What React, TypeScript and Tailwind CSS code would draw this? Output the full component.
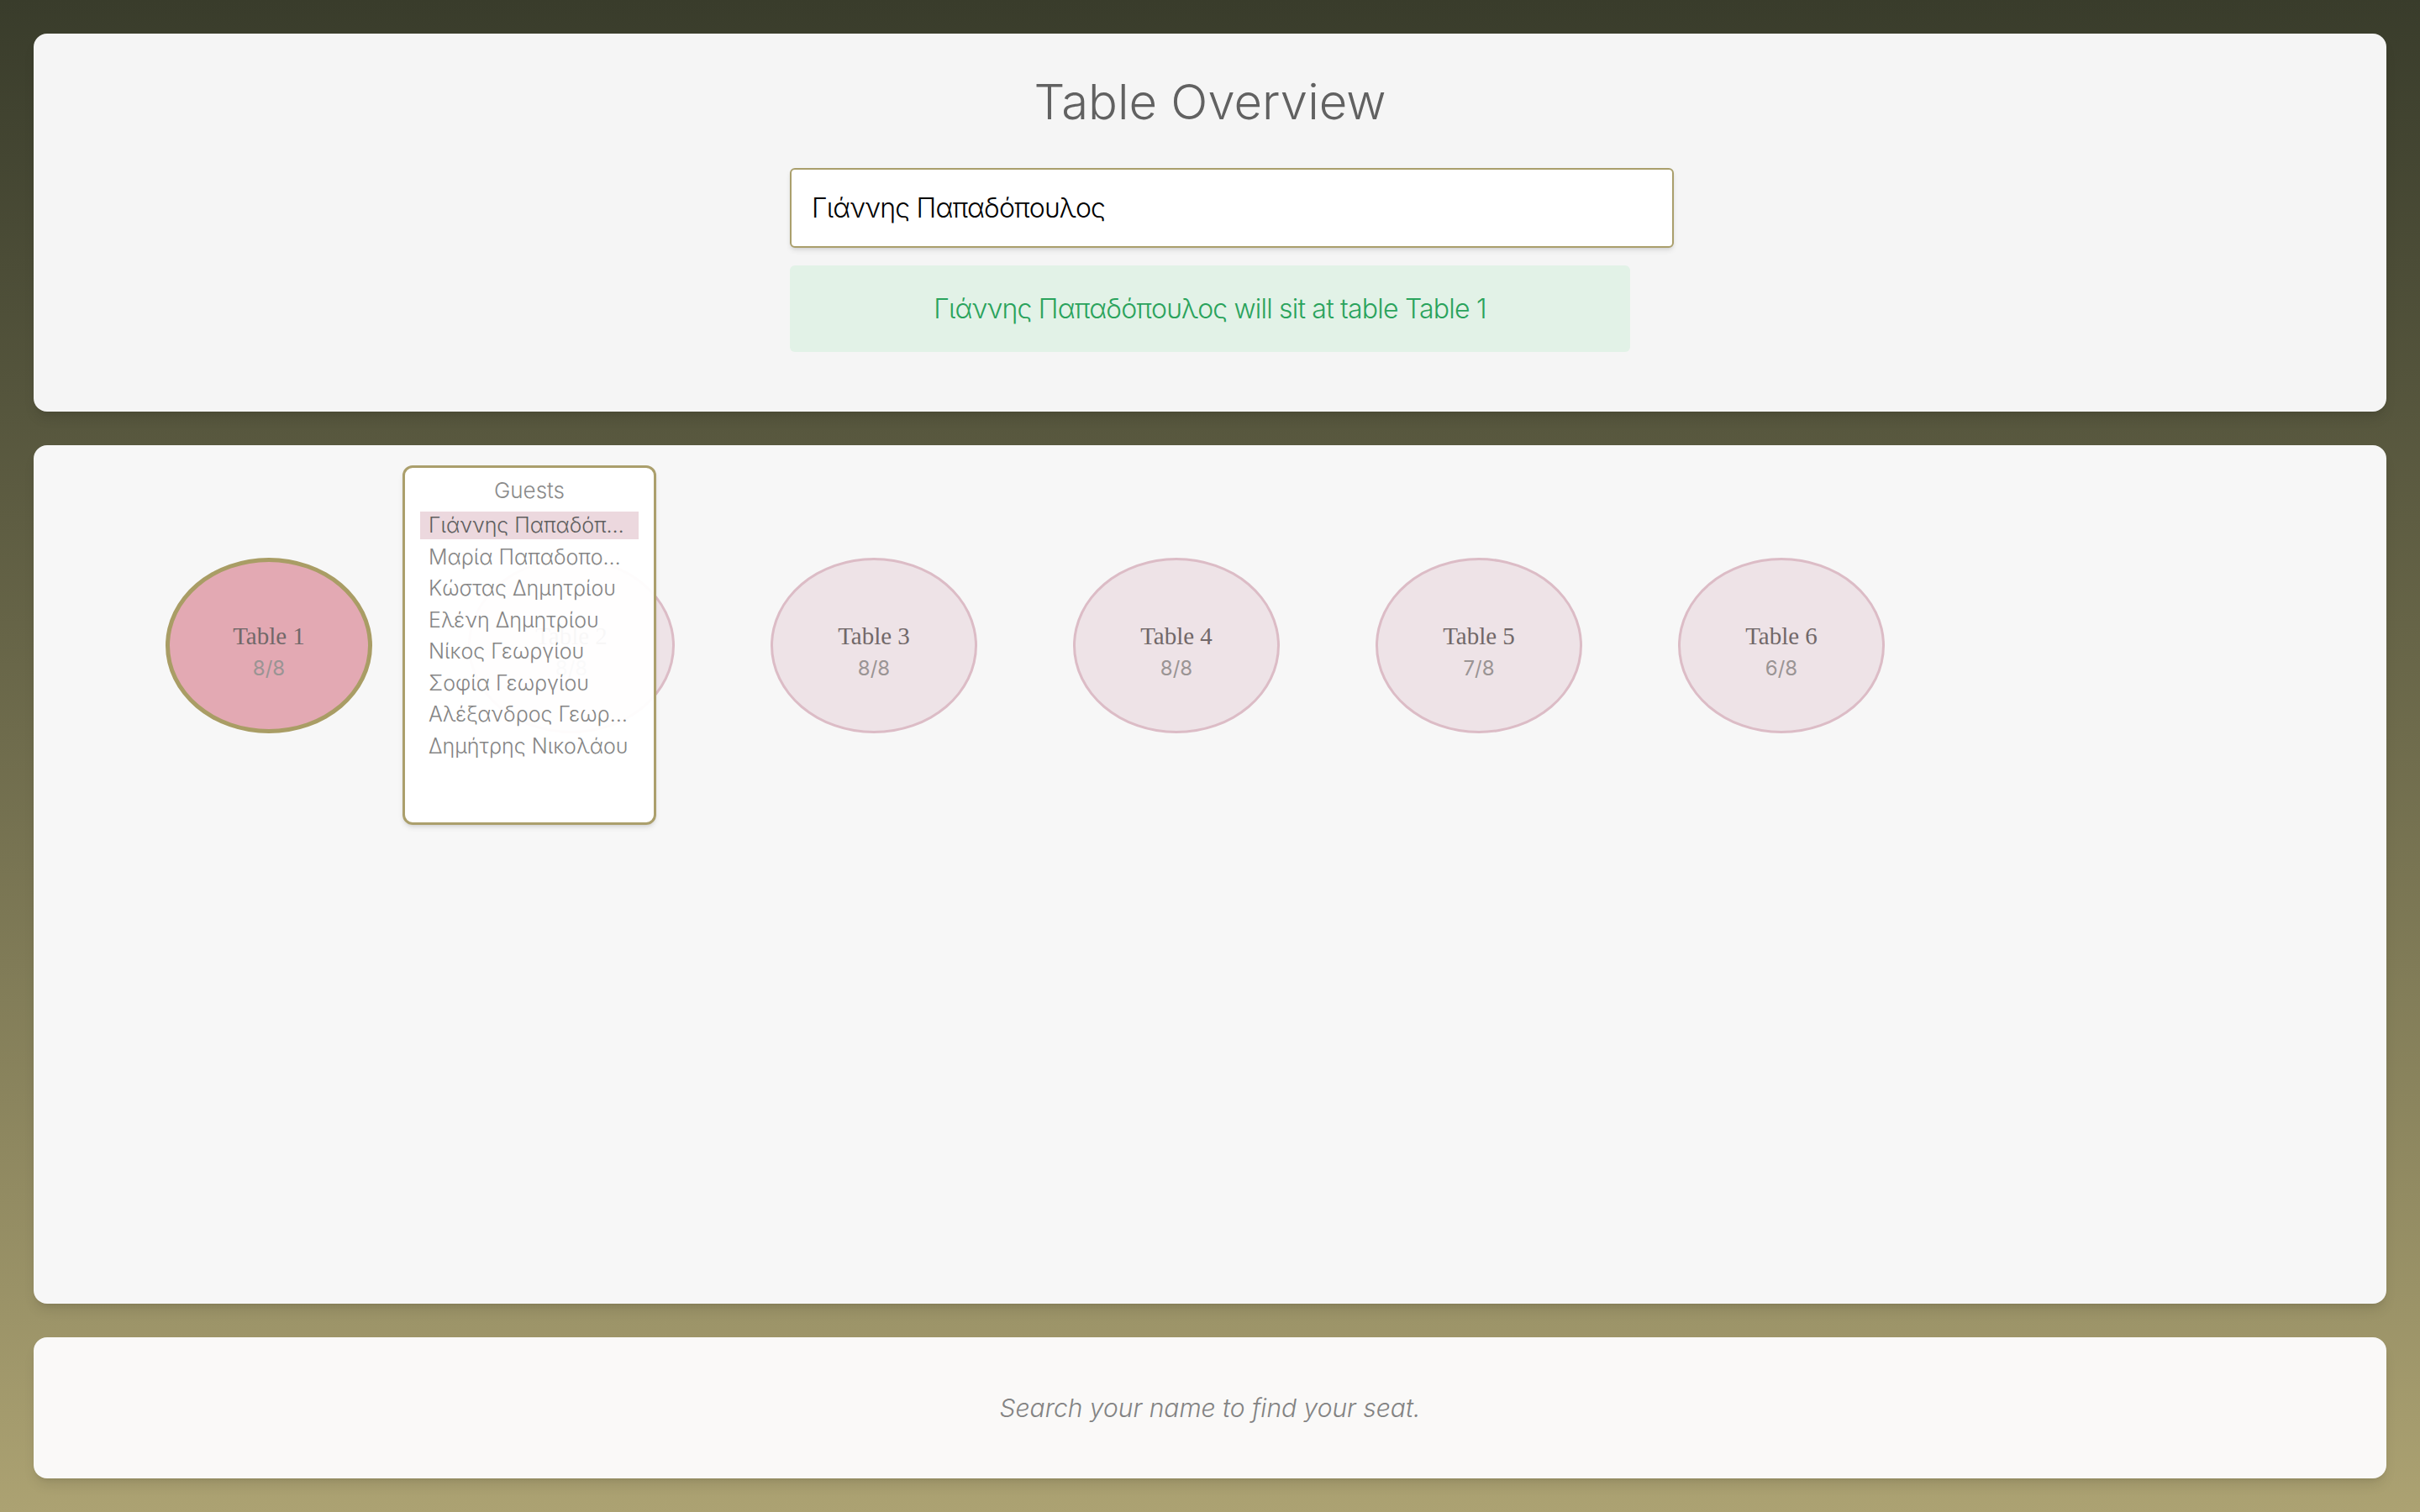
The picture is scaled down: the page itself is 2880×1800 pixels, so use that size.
import React from 'react';

const tables = [
    { id: 1, name: 'Table 1', count: '8/8', active: true },
    { id: 2, name: 'Table 2', count: '8/8', active: false },
    { id: 3, name: 'Table 3', count: '8/8', active: false },
    { id: 4, name: 'Table 4', count: '8/8', active: false },
    { id: 5, name: 'Table 5', count: '7/8', active: false },
    { id: 6, name: 'Table 6', count: '6/8', active: false },
];

const guests = [
    'Γιάννης Παπαδόπουλος',
    'Μαρία Παπαδοπούλου',
    'Κώστας Δημητρίου',
    'Ελένη Δημητρίου',
    'Νίκος Γεωργίου',
    'Σοφία Γεωργίου',
    'Αλέξανδρος Γεωργίου',
    'Δημήτρης Νικολάου',
];

const sans = { fontFamily: 'Inter, "Noto Sans", sans-serif' };

function TableCircle({ name, count, active }: { name: string; count: string; active: boolean }) {
    return (
        <div
            className={
                active
                    ? 'w-[246px] h-[209px] shrink-0 rounded-[50%] bg-[#e3a9b3] border-[5px] border-[#a99d65] flex flex-col items-center justify-center pt-[14px]'
                    : 'w-[246px] h-[209px] shrink-0 rounded-[50%] bg-[#eee3e7] border-[3px] border-[#dcbcc6] flex flex-col items-center justify-center pt-[14px]'
            }
        >
            <span className="text-[29px] leading-none text-[#716869]" style={{ fontFamily: '"Liberation Serif", serif' }}>
                {name}
            </span>
            <span className="text-[24px] leading-none mt-[12px] text-[#9a9494]" style={sans}>
                {count}
            </span>
        </div>
    );
}

export default function App() {
    return (
        <div className="min-h-screen w-full bg-gradient-to-b from-[#393c2b] to-[#aca272] p-[40px] flex flex-col gap-[40px]" style={sans}>
            {/* search card */}
            <div className="h-[450px] rounded-2xl bg-[#f5f5f5] shadow-lg flex flex-col items-center pt-[52px]">
                <h1 className="text-[58px] leading-none font-light text-[#616161]">Table Overview</h1>
                <div className="w-[1000px] mt-[50px]">
                    <input
                        readOnly
                        value="Γιάννης Παπαδόπουλος"
                        className="w-[1052px] h-[95px] px-[24px] rounded-md border-2 border-[#aa9f6c] bg-white text-[32px] font-light text-black shadow-md outline-none tracking-tight"
                    />
                    <div className="mt-[21px] h-[103px] rounded-md bg-[#e2f2e7] flex items-center justify-center">
                        <span className="text-[32px] font-light text-[#2aa35c] tracking-tight">
                            Γιάννης Παπαδόπουλος will sit at table Table 1
                        </span>
                    </div>
                </div>
            </div>

            {/* tables */}
            <div className="relative h-[1022px] rounded-2xl bg-[#f7f7f7] shadow-lg">
                <div className="flex pl-[157px] pt-[134px] gap-[114px]">
                    {tables.map((t) => (
                        <TableCircle key={t.id} name={t.name} count={t.count} active={t.active} />
                    ))}
                </div>

                <div className="absolute left-[439px] top-[24px] w-[302px] h-[428px] rounded-xl border-[3px] border-[#ab9f6c] bg-white/95 shadow-md px-[18px] pt-[10px]">
                    <div className="text-center text-[26px] font-light text-[#8a8a8a] leading-[34px]">Guests</div>
                    <div className="mt-[8px] flex flex-col gap-[4.5px]">
                        {guests.map((g, i) => (
                            <div
                                key={g}
                                className={
                                    i === 0
                                        ? 'h-[33px] px-[10px] bg-[#ecd8de] text-[#5f5f5f] text-[25px] font-light leading-[33px] truncate'
                                        : 'h-[33px] px-[10px] text-[#858585] text-[25px] font-light leading-[33px] truncate'
                                }
                            >
                                {g}
                            </div>
                        ))}
                    </div>
                </div>
            </div>

            {/* footer hint */}
            <div className="h-[168px] rounded-2xl bg-[#faf9f8] shadow-lg flex items-center justify-center">
                <span className="text-[30px] italic font-light text-[#838383]">Search your name to find your seat.</span>
            </div>
        </div>
    );
}
